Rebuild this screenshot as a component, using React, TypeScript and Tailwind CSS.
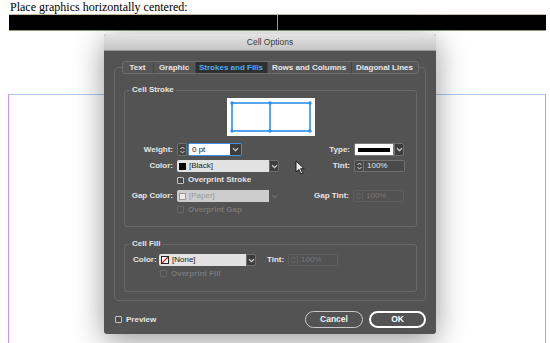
import React from "react";

// Cuadro "Cell Options" sobre la página del documento
const ui = "font-['Liberation_Sans',Arial,sans-serif]";

const tabs = [
  { label: "Text", w: "w-[30px]" },
  { label: "Graphic", w: "w-[42px]" },
  { label: "Strokes and Fills", w: "w-[72px]", active: true },
  { label: "Rows and Columns", w: "w-[84px]" },
  { label: "Diagonal Lines", w: "w-[67px]" },
];

function Chevron({ className = "" }: { className?: string }) {
  return (
    <svg width="7" height="5" viewBox="0 0 7 5" className={className}>
      <path d="M1 1.2l2.5 2.4L6 1.2" stroke="currentColor" strokeWidth="1.2" fill="none" />
    </svg>
  );
}

function Spinner({ disabled }: { disabled?: boolean }) {
  return (
    <div
      className={`w-[10px] h-full flex items-center justify-center rounded-l-[2px] border ${
        disabled ? "border-[#5f5f5f] text-[#6f6f6f]" : "border-[#717171] bg-[#474747] text-[#d8d8d8]"
      }`}
    >
      <svg width="7" height="10" viewBox="0 0 7 10">
        <path d="M1.5 4L3.5 2L5.5 4" stroke="currentColor" strokeWidth="1" fill="none" />
        <path d="M1.5 6L3.5 8L5.5 6" stroke="currentColor" strokeWidth="1" fill="none" />
      </svg>
    </div>
  );
}

function Dropdown({ w = "w-[10px]" }: { w?: string }) {
  return (
    <div className={`${w} h-full flex items-center justify-center bg-[#3d3d3d] border border-[#6f6f6f] rounded-r-[2px] text-[#d0d0d0]`}>
      <Chevron />
    </div>
  );
}

function Label({ w, children }: { w: string; children: React.ReactNode }) {
  return <span className={`${w} text-right text-[8px] font-bold leading-none text-[#e6e6e6]`}>{children}</span>;
}

function Check({ label, disabled, className = "" }: { label: string; disabled?: boolean; className?: string }) {
  return (
    <div className={`flex items-center h-full ${className}`}>
      <span
        className={`w-[7px] h-[7px] rounded-[1px] border ${
          disabled ? "border-[#686868]" : "border-[#c4c4c4] bg-[#4a4a4a]"
        }`}
      />
      <span className={`ml-[4px] text-[8px] font-bold leading-none ${disabled ? "text-[#777777]" : "text-[#e6e6e6]"}`}>
        {label}
      </span>
    </div>
  );
}

function NumField({ value, disabled, w }: { value: string; disabled?: boolean; w: string }) {
  return (
    <div className="flex h-full">
      <Spinner disabled={disabled} />
      <div
        className={`${w} h-full flex items-center pl-[3px] border border-l-0 rounded-r-[2px] text-[8px] ${
          disabled ? "border-[#5f5f5f] bg-[#525252] text-[#777777]" : "border-[#717171] bg-[#4a4a4a] text-[#e4e4e4]"
        }`}
      >
        {value}
      </div>
    </div>
  );
}

function StrokePreview() {
  return (
    <svg width="88" height="38" viewBox="0 0 88 38">
      <rect x="0" y="0" width="88" height="38" fill="#ffffff" />
      <rect x="5" y="5" width="78" height="28" fill="none" stroke="#2c8ff0" strokeWidth="1.6" />
      <line x1="43" y1="5" x2="43" y2="33" stroke="#2c8ff0" strokeWidth="1.6" />
      {[
        [5, 5], [43, 5], [83, 5], [5, 33], [43, 33], [83, 33],
      ].map(([cx, cy], i) => (
        <circle key={i} cx={cx} cy={cy} r="1.7" fill="#2c8ff0" />
      ))}
    </svg>
  );
}

function CellStroke() {
  return (
    <fieldset className="ml-[9px] mr-[8px] mt-[11px] border border-[#686868] rounded-[3px] pb-[11px]">
      <legend className="ml-[5px] px-[2px] text-[8px] font-bold leading-[10px] text-[#e6e6e6]">Cell Stroke</legend>

      <div className="flex justify-center mt-[3px]">
        <StrokePreview />
      </div>

      {/* Weight / Type */}
      <div className="flex items-center mt-[7px] h-[13px]">
        <div className="flex items-center w-[180px] h-full">
          <Label w="w-[48px]">Weight:</Label>
          <div className="ml-[4px] flex h-full">
            <Spinner />
            <div className="flex h-full ml-[1px] border border-[#3f94ea] rounded-[2px]">
              <div className="w-[41px] h-full bg-white flex items-center pl-[3px] text-[8px] text-[#222]">0 pt</div>
              <div className="w-[11px] h-full flex items-center justify-center bg-[#3d3d3d] text-[#d0d0d0]">
                <Chevron />
              </div>
            </div>
          </div>
        </div>
        <div className="flex items-center h-full">
          <Label w="w-[45px]">Type:</Label>
          <div className="ml-[4px] flex h-full">
            <div className="w-[40px] h-full bg-white border border-[#7a7a7a] rounded-l-[2px] flex items-center px-[3px]">
              <div className="w-full h-[4px] bg-black" />
            </div>
            <Dropdown />
          </div>
        </div>
      </div>

      {/* Color / Tint */}
      <div className="flex items-center mt-[4px] h-[12px]">
        <div className="flex items-center w-[180px] h-full">
          <Label w="w-[48px]">Color:</Label>
          <div className="ml-[4px] flex h-full">
            <div className="w-[92px] h-full bg-[#e2e2e2] rounded-l-[2px] flex items-center pl-[2px] text-[8px] text-[#1e1e1e]">
              <span className="w-[7px] h-[7px] bg-black mr-[3px]" />
              [Black]
            </div>
            <Dropdown />
          </div>
        </div>
        <div className="flex items-center h-full">
          <Label w="w-[45px]">Tint:</Label>
          <div className="ml-[4px] h-full">
            <NumField value="100%" w="w-[41px]" />
          </div>
        </div>
      </div>

      <div className="flex mt-[2px] h-[12px] pl-[52px]">
        <Check label="Overprint Stroke" />
      </div>

      {/* Gap Color / Gap Tint */}
      <div className="flex items-center mt-[4px] h-[12px]">
        <div className="flex items-center w-[180px] h-full">
          <Label w="w-[48px]">Gap Color:</Label>
          <div className="ml-[4px] flex h-full">
            <div className="w-[92px] h-full bg-[#cdcdcd] rounded-l-[2px] flex items-center pl-[2px] text-[8px] text-[#9a9a9a]">
              <span className="w-[7px] h-[7px] bg-[#ececec] border border-[#9a9a9a] mr-[3px]" />
              [Paper]
            </div>
            <div className="w-[10px] h-full flex items-center justify-center text-[#6e6e6e]">
              <Chevron />
            </div>
          </div>
        </div>
        <div className="flex items-center h-full">
          <Label w="w-[44px]">Gap Tint:</Label>
          <div className="ml-[4px] h-full">
            <NumField value="100%" w="w-[41px]" disabled />
          </div>
        </div>
      </div>

      <div className="flex mt-[2px] h-[11px] pl-[52px]">
        <Check label="Overprint Gap" disabled />
      </div>
    </fieldset>
  );
}

function CellFill() {
  return (
    <fieldset className="ml-[9px] mr-[8px] mt-[12px] border border-[#686868] rounded-[3px] pb-[12px]">
      <legend className="ml-[5px] px-[2px] text-[8px] font-bold leading-[10px] text-[#e6e6e6]">Cell Fill</legend>

      <div className="flex items-center mt-[5px] h-[12px] pl-[8px]">
        <span className="w-[26px] text-[8px] font-bold leading-none text-[#e6e6e6]">Color:</span>
        <div className="flex h-full">
          <div className="w-[87px] h-full bg-[#e2e2e2] rounded-l-[2px] flex items-center pl-[2px] text-[8px] text-[#1e1e1e]">
            <svg width="8" height="8" viewBox="0 0 8 8" className="mr-[3px]">
              <rect x="0.5" y="0.5" width="7" height="7" fill="#fff" stroke="#222" />
              <line x1="1" y1="7" x2="7" y2="1" stroke="#e02020" strokeWidth="1.3" />
            </svg>
            [None]
          </div>
          <Dropdown />
        </div>
        <span className="ml-[11px] w-[17px] text-[8px] font-bold leading-none text-[#e6e6e6]">Tint:</span>
        <div className="ml-[4px] h-full">
          <NumField value="100%" w="w-[40px]" disabled />
        </div>
      </div>

      <div className="flex mt-[2px] h-[11px] pl-[35px]">
        <Check label="Overprint Fill" disabled />
      </div>
    </fieldset>
  );
}

function CellOptions() {
  return (
    <div
      className={`absolute left-[104px] top-[34px] w-[332px] bg-[#535353] rounded-[3px] shadow-[0_6px_30px_rgba(0,0,0,0.42)] overflow-hidden ${ui}`}
    >
      {/* Barra de título */}
      <div className="h-[17px] flex items-center justify-center bg-gradient-to-b from-[#e4e4e4] to-[#c6c6c6] border-b border-[#9a9a9a] text-[8.5px] text-[#3a3a3a]">
        Cell Options
      </div>

      <div className="px-[10px] pt-[16px] pb-[6px]">
        <div className="border border-[#686868] rounded-[4px] pb-[8px]">
          {/* Pestañas */}
          <div className="flex justify-center -mt-[7px]">
            <div className="flex h-[13px] border border-[#6e6e6e] rounded-[3px] bg-[#565656] overflow-hidden">
              {tabs.map((t, i) => (
                <div
                  key={t.label}
                  className={`${t.w} flex items-center justify-center text-[8px] font-bold leading-none ${
                    i > 0 ? "border-l border-[#444444]" : ""
                  } ${t.active ? "bg-[#2f2f2f] text-[#4cacf5]" : "text-[#e8e8e8]"}`}
                >
                  {t.label}
                </div>
              ))}
            </div>
          </div>

          <CellStroke />
          <CellFill />
        </div>

        {/* Pie: Preview + botones */}
        <div className="flex items-center mt-[10px] h-[17px]">
          <Check label="Preview" className="ml-[1px]" />
          <div className="ml-auto flex gap-[6px] h-full">
            <button className="w-[58px] h-full rounded-full border-[1.5px] border-[#c9c9c9] text-[8.5px] font-bold text-[#f0f0f0]">
              Cancel
            </button>
            <button className="w-[57px] h-full rounded-full border-2 border-white text-[8.5px] font-bold text-white">
              OK
            </button>
          </div>
        </div>
      </div>

      {/* Puntero del ratón */}
      <svg width="10" height="15" viewBox="0 0 10 15" className="absolute left-[191px] top-[126px]">
        <path d="M1 1L1 12L3.8 9.4L6 14L7.8 13.2L5.6 8.7L9.2 8.7Z" fill="#e8e8e8" stroke="#111" strokeWidth="0.9" />
      </svg>
    </div>
  );
}

export default function App() {
  return (
    <div className="relative w-[550px] h-[343px] bg-white overflow-hidden">
      <p className="h-[14px] pl-[10px] font-['Liberation_Serif',serif] text-[12px] leading-[14px] text-black">
        Place graphics horizontally centered:
      </p>
      <div className="ml-[9px] mr-[4px] h-[17px] flex bg-black border-t border-t-[#cbbd9f] border-b border-b-[#8c9c7c]">
        <div className="flex-1 border-r border-[#a3a3a3]" />
        <div className="flex-1" />
      </div>
      {/* Guías de margen */}
      <div className="ml-[8px] w-[538px] h-[312px] border-x border-[#d990f4]">
        <div className="mt-[63px] border-t border-[#a9c8f2]" />
      </div>

      <CellOptions />
    </div>
  );
}
